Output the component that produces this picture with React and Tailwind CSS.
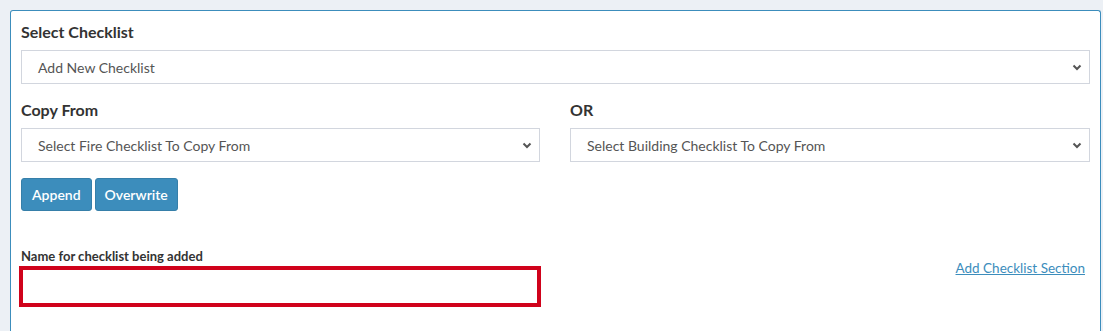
import React from 'react';

const Chevron = () => (
    <svg width="10" height="7" viewBox="0 0 10 7" className="shrink-0">
        <path d="M1.5 1.5 L5 5 L8.5 1.5" fill="none" stroke="#555" strokeWidth="2" />
    </svg>
);

const SelectBox = ({ label }) => (
    <div className="h-[34px] border border-[#d2d6de] bg-white flex items-center justify-between pl-4 pr-[7px] text-[14px] text-[#555]">
        <span>{label}</span>
        <Chevron />
    </div>
);

export default function App() {
    return (
        <div className="min-h-[331px] bg-[#ecf0f5] pt-[10px] pl-[10px] pr-[2px] font-['Lato','Liberation_Sans',sans-serif] text-[#333]">
            <div className="bg-white border border-[#3c8dbc] rounded-t-[3px] border-b-0 px-[10px] pt-[11px] pb-6 h-[321px]">
                <h3 className="text-[16px] font-bold leading-5 mb-[8px]">Select Checklist</h3>
                <SelectBox label="Add New Checklist" />

                <div className="grid grid-cols-[519px_1fr] gap-[30px] mt-[16px]">
                    <div>
                        <h3 className="text-[16px] font-bold leading-5 mb-[8px]">Copy From</h3>
                        <SelectBox label="Select Fire Checklist To Copy From" />
                    </div>
                    <div>
                        <h3 className="text-[16px] font-bold leading-5 mb-[8px]">OR</h3>
                        <SelectBox label="Select Building Checklist To Copy From" />
                    </div>
                </div>

                <div className="flex gap-[3px] mt-[16px]">
                    <button className="h-[33px] px-[10px] bg-[#3c8dbc] border border-[#367fa9] rounded-[3px] text-white text-[14px] font-semibold">
                        Append
                    </button>
                    <button className="h-[33px] px-[9px] bg-[#3c8dbc] border border-[#367fa9] rounded-[3px] text-white text-[14px] font-semibold">
                        Overwrite
                    </button>
                </div>

                <div className="grid grid-cols-[519px_1fr] gap-[30px] mt-[37px]">
                    <div>
                        <label className="block text-[13px] font-bold leading-4 mb-[2px]">Name for checklist being added</label>
                        <input type="text" className="block w-[522px] -ml-[2px] h-[41px] border-[4px] border-[#d0021b] bg-white outline-none" />
                    </div>
                    <div className="flex justify-end pt-[10px] pr-[5px]">
                        <a href="#" className="text-[13.5px] text-[#3c8dbc] underline leading-5 h-5">Add Checklist Section</a>
                    </div>
                </div>
            </div>
        </div>
    );
}
